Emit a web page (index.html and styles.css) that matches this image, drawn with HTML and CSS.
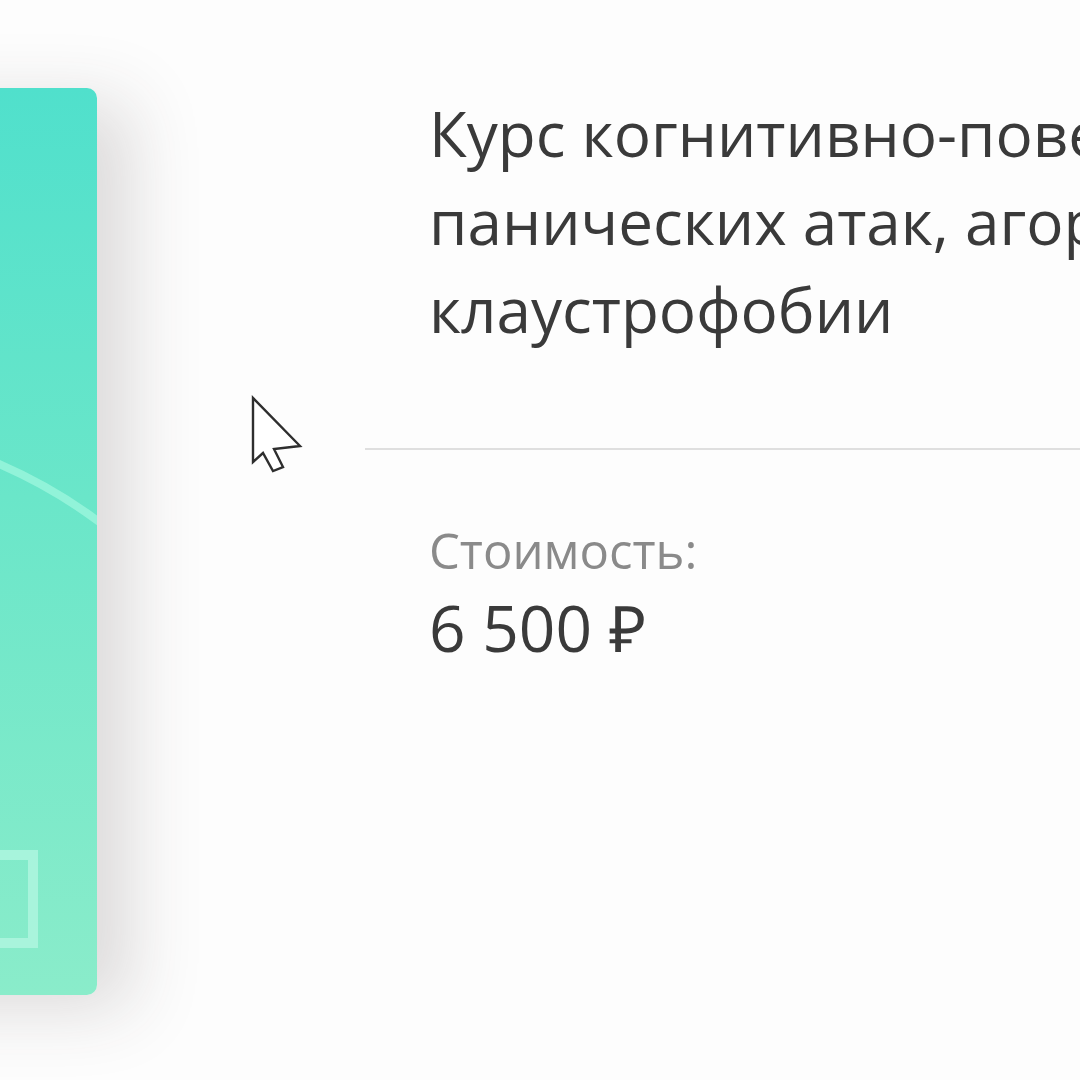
FILE: index.html
```html
<!DOCTYPE html>
<html lang="ru">
  <head>
    <meta charset="UTF-8" />
    <meta name="viewport" content="width=device-width, initial-scale=1.0" />
    <title>Курс КПТ</title>
    <link rel="stylesheet" href="styles.css">
  </head>
  <body>
    <div class="page">
      <div class="cover">
        <svg class="cover-art" viewBox="0 0 300 907" width="300" height="907">
          <path d="M -60 322 Q 170 330 310 440" fill="none" stroke="#9ff7de" stroke-opacity="0.75" stroke-width="8" />
          <rect x="150" y="767" width="86" height="88" fill="none" stroke="#b4f7e2" stroke-opacity="0.75" stroke-width="10" />
        </svg>
      </div>

      <div class="info">
        <h1 class="title">
          <span>Курс когнитивно-поведенческой терапии</span>
          <span>панических атак, агорафобии и</span>
          <span>клаустрофобии</span>
        </h1>

        <hr class="divider" />

        <div class="price">
          <p class="price-label">Стоимость:</p>
          <p class="price-value">6 500 ₽</p>
        </div>
      </div>

      <!-- курсор поверх страницы -->
      <svg class="cursor" width="56" height="80" viewBox="0 0 56 80">
        <path d="M3 3 L3 67 L13 58 L23 76 L33 72 L24 54 L50 51 Z" fill="#fff" stroke="#2e2e2e" stroke-width="2.4" stroke-linejoin="miter" />
      </svg>
    </div>
  </body>
</html>
```

FILE: styles.css
```css
body {
  margin: 0;
  background: #fdfdfd;
  font-family: "Open Sans", "Liberation Sans", sans-serif;
  overflow: hidden;
}
.page {
  position: relative;
  display: flex;
  align-items: flex-start;
  width: 1080px;
  height: 1080px;
}
.cover {
  flex: none;
  width: 300px;
  height: 907px;
  margin-left: -203px;
  margin-top: 88px;
  border-radius: 10px;
  background: linear-gradient(180deg, #50e0cc 0%, #6ae6c9 45%, #8aecca 100%);
  box-shadow: 34px 14px 70px rgba(60, 50, 50, 0.17);
  overflow: hidden;
}
.cover-art {
  display: block;
}
.info {
  flex: 1;
  margin-left: 268px;
  padding-top: 89px;
  min-width: 0;
}
.title {
  margin: 0;
  padding-left: 64px;
  font-size: 62px;
  font-weight: 400;
  line-height: 88px;
  color: #3a3a3a;
  white-space: nowrap;
}
.title span {
  display: block;
}
.divider {
  margin: 95px 0 0;
  border: none;
  height: 2px;
  background: #dfdfdf;
}
.price {
  padding-left: 64px;
  padding-top: 58px;
}
.price p {
  margin: 0;
}
.price-label {
  font-size: 49px;
  line-height: 84px;
  color: #8a8a8a;
}
.price-value {
  font-size: 64px;
  line-height: 72px;
  color: #3a3a3a;
}
.cursor {
  position: absolute;
  left: 250px;
  top: 395px;
}
```
